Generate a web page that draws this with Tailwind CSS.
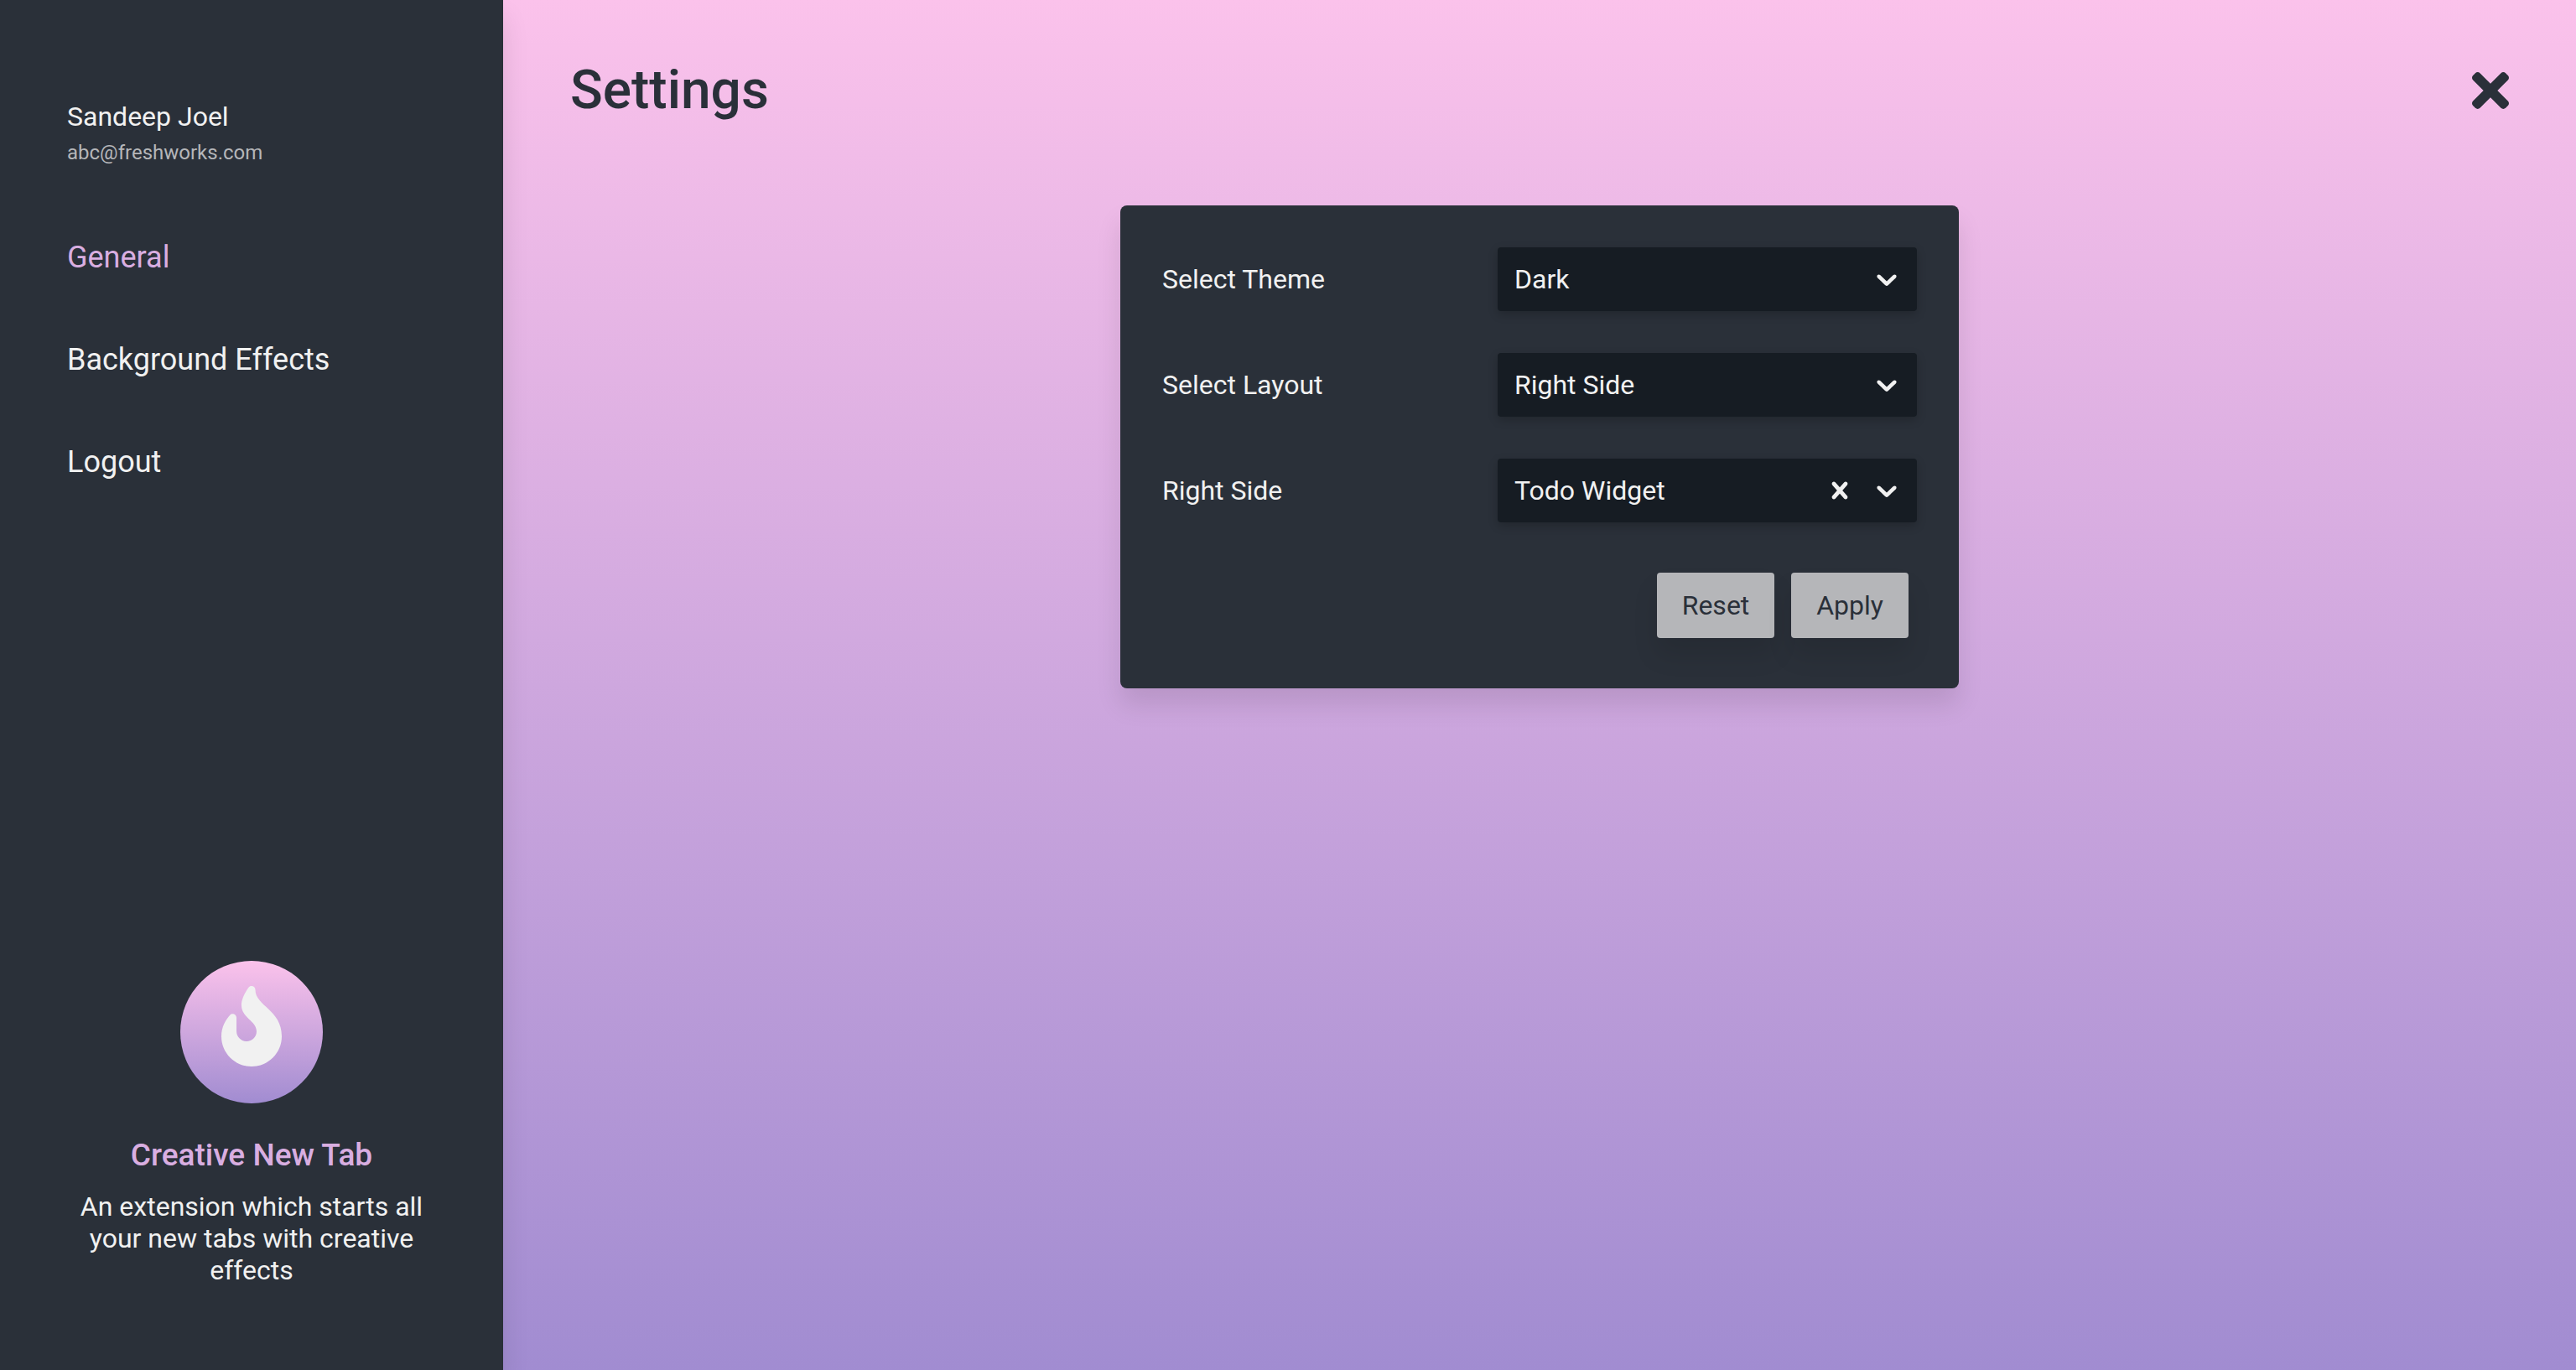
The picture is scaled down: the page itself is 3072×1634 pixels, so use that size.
<!DOCTYPE html>
<html lang="en">
<head>
<meta charset="utf-8">
<meta name="viewport" content="width=device-width, initial-scale=1">
<title>Settings</title>
<script src="https://cdn.jsdelivr.net/npm/@tailwindcss/browser@4"></script>
</head>
<body class="flex min-h-screen bg-[linear-gradient(#fbc2eb,#a18cd1)] font-[Roboto,sans-serif] text-[32px] leading-[38px] text-[#f1f1f1]">

<aside class="flex w-[600px] shrink-0 flex-col justify-between bg-[#2a3039] px-20 pt-[120px] pb-[100px] shadow-[0_20px_30px_rgba(0,0,0,0.1)]">
  <div>
    <p>Sandeep Joel</p>
    <p class="mt-2 text-[24px] leading-[32px] text-[#b5b6b9]">abc@freshworks.com</p>
    <nav class="mt-[88px] flex flex-col gap-20 text-[36px] leading-[42px]">
      <a href="#general" class="text-[#d9aee1]" aria-current="page">General</a>
      <a href="#effects">Background Effects</a>
      <a href="#logout">Logout</a>
    </nav>
  </div>
  <div class="flex flex-col items-center text-center">
    <div class="flex h-[170px] w-[170px] justify-center rounded-full bg-[linear-gradient(#fbc2eb,#a18cd1)] pt-[30px]">
      <svg class="h-24 w-[72px]" viewBox="0 0 384 512" fill="#f1f1f1" aria-hidden="true"><path d="M216 23.86c0-23.8-30.65-32.77-44.15-13.04C48 191.85 224 200 224 288c0 35.63-29.11 64.46-64.85 63.99-35.17-.45-63.15-29.77-63.15-64.94v-85.51c0-21.7-26.47-32.23-41.43-16.5C27.8 213.16 0 261.33 0 320c0 105.87 86.13 192 192 192s192-86.13 192-192c0-170.29-168-193-168-296.14z"/></svg>
    </div>
    <h2 class="mt-10 text-[37px] leading-[44px] font-medium text-[#d9aee1]">Creative New Tab</h2>
    <p class="mt-5">An extension which starts all your new tabs with creative effects</p>
  </div>
</aside>

<main class="flex grow flex-col items-center">
  <header class="flex w-full items-center justify-between px-20 pt-[70px]">
    <h1 class="text-[64px] leading-[76px] font-medium text-[#2a3039]">Settings</h1>
    <button type="button" aria-label="Close">
      <svg class="h-16 w-11" viewBox="0 0 352 512" fill="#2a3039" aria-hidden="true"><path d="M242.72 256l100.07-100.07c12.28-12.28 12.28-32.19 0-44.48l-22.24-22.24c-12.28-12.28-32.19-12.28-44.48 0L176 189.28 75.93 89.21c-12.28-12.28-32.19-12.28-44.48 0L9.21 111.45c-12.28 12.28-12.28 32.19 0 44.48L109.28 256 9.21 356.07c-12.28 12.28-12.28 32.19 0 44.48l22.24 22.24c12.28 12.28 32.2 12.28 44.48 0L176 322.72l100.07 100.07c12.28 12.28 32.2 12.28 44.48 0l22.24-22.24c12.28-12.28 12.28-32.19 0-44.48L242.72 256z"/></svg>
    </button>
  </header>

  <form class="mt-[99px] flex w-[1000px] flex-col gap-[50px] rounded-lg bg-[#2a3039] p-[50px] pb-[60px] shadow-[0_20px_30px_rgba(0,0,0,0.1)]">
    <div class="flex items-center justify-between">
      <label for="theme">Select Theme</label>
      <div class="relative w-[500px] rounded shadow-[0_4px_12px_rgba(0,0,0,0.2)]">
        <select id="theme" class="h-[76px] w-full appearance-none rounded bg-[#161c23] px-5"><option>Dark</option><option>Light</option></select>
        <svg class="pointer-events-none absolute inset-y-0 right-4 my-auto h-10 w-10" viewBox="0 0 20 20" fill="#f1f1f1" aria-hidden="true"><path d="M4.516 7.548c0.436-0.446 1.043-0.481 1.576 0l3.908 3.747 3.908-3.747c0.533-0.481 1.141-0.446 1.574 0 0.436 0.445 0.408 1.197 0 1.615-0.406 0.418-4.695 4.502-4.695 4.502-0.217 0.223-0.502 0.335-0.787 0.335s-0.57-0.112-0.789-0.335c0 0-4.287-4.084-4.695-4.502s-0.436-1.17 0-1.615z"/></svg>
      </div>
    </div>
    <div class="flex items-center justify-between">
      <label for="layout">Select Layout</label>
      <div class="relative w-[500px] rounded shadow-[0_4px_12px_rgba(0,0,0,0.2)]">
        <select id="layout" class="h-[76px] w-full appearance-none rounded bg-[#161c23] px-5"><option>Right Side</option><option>Left Side</option></select>
        <svg class="pointer-events-none absolute inset-y-0 right-4 my-auto h-10 w-10" viewBox="0 0 20 20" fill="#f1f1f1" aria-hidden="true"><path d="M4.516 7.548c0.436-0.446 1.043-0.481 1.576 0l3.908 3.747 3.908-3.747c0.533-0.481 1.141-0.446 1.574 0 0.436 0.445 0.408 1.197 0 1.615-0.406 0.418-4.695 4.502-4.695 4.502-0.217 0.223-0.502 0.335-0.787 0.335s-0.57-0.112-0.789-0.335c0 0-4.287-4.084-4.695-4.502s-0.436-1.17 0-1.615z"/></svg>
      </div>
    </div>
    <div class="flex items-center justify-between">
      <label for="widget">Right Side</label>
      <div class="relative w-[500px] rounded shadow-[0_4px_12px_rgba(0,0,0,0.2)]">
        <select id="widget" class="h-[76px] w-full appearance-none rounded bg-[#161c23] px-5"><option>Todo Widget</option></select>
        <button type="button" aria-label="Clear selection" class="absolute inset-y-0 right-[72px] my-auto h-10 w-10">
          <svg class="h-10 w-10" viewBox="0 0 20 20" fill="#f1f1f1" aria-hidden="true"><path d="M14.348 14.849c-0.469 0.469-1.229 0.469-1.697 0l-2.651-3.030-2.651 3.029c-0.469 0.469-1.229 0.469-1.697 0-0.469-0.469-0.469-1.229 0-1.697l2.758-3.15-2.759-3.152c-0.469-0.469-0.469-1.228 0-1.697s1.228-0.469 1.697 0l2.652 3.031 2.651-3.031c0.469-0.469 1.228-0.469 1.697 0s0.469 1.229 0 1.697l-2.758 3.152 2.758 3.15c0.469 0.469 0.469 1.229 0 1.698z"/></svg>
        </button>
        <svg class="pointer-events-none absolute inset-y-0 right-4 my-auto h-10 w-10" viewBox="0 0 20 20" fill="#f1f1f1" aria-hidden="true"><path d="M4.516 7.548c0.436-0.446 1.043-0.481 1.576 0l3.908 3.747 3.908-3.747c0.533-0.481 1.141-0.446 1.574 0 0.436 0.445 0.408 1.197 0 1.615-0.406 0.418-4.695 4.502-4.695 4.502-0.217 0.223-0.502 0.335-0.787 0.335s-0.57-0.112-0.789-0.335c0 0-4.287-4.084-4.695-4.502s-0.436-1.17 0-1.615z"/></svg>
      </div>
    </div>
    <div class="flex justify-end gap-5 px-2.5 pt-2.5 text-[#2a3039]">
      <button type="button" class="h-[78px] w-[140px] rounded bg-[#b5b6b9] shadow-[0_20px_30px_rgba(0,0,0,0.1)]">Reset</button>
      <button type="submit" class="h-[78px] w-[140px] rounded bg-[#b5b6b9] shadow-[0_20px_30px_rgba(0,0,0,0.1)]">Apply</button>
    </div>
  </form>
</main>
</body>
</html>
